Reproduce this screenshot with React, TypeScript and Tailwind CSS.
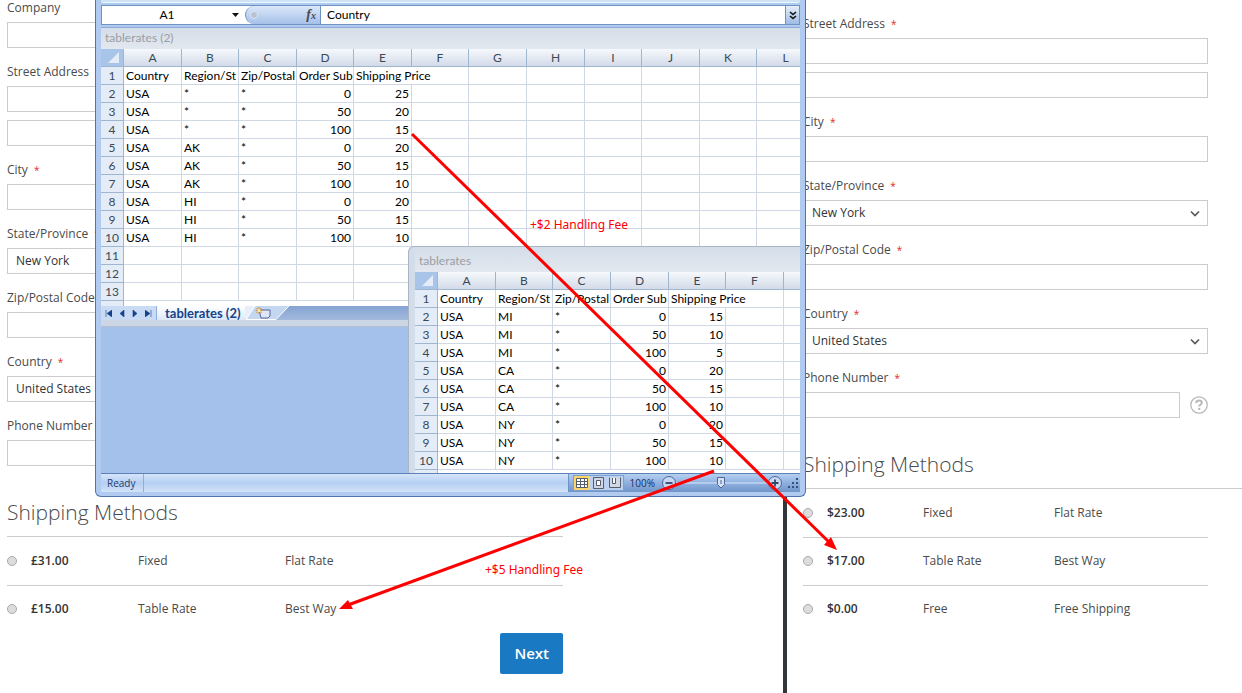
import React from 'react';

const COLUMNS = ['A', 'B', 'C', 'D', 'E', 'F', 'G', 'H', 'I', 'J', 'K', 'L'];
const HEADINGS = ['Country', 'Region/St', 'Zip/Postal', 'Order Sub'];

const FIRST_SHEET = [
  ['USA', '*', '*', '0', '25'],
  ['USA', '*', '*', '50', '20'],
  ['USA', '*', '*', '100', '15'],
  ['USA', 'AK', '*', '0', '20'],
  ['USA', 'AK', '*', '50', '15'],
  ['USA', 'AK', '*', '100', '10'],
  ['USA', 'HI', '*', '0', '20'],
  ['USA', 'HI', '*', '50', '15'],
  ['USA', 'HI', '*', '100', '10'],
  [],
  [],
  [],
];

const SECOND_SHEET = [
  ['USA', 'MI', '*', '0', '15'],
  ['USA', 'MI', '*', '50', '10'],
  ['USA', 'MI', '*', '100', '5'],
  ['USA', 'CA', '*', '0', '20'],
  ['USA', 'CA', '*', '50', '15'],
  ['USA', 'CA', '*', '100', '10'],
  ['USA', 'NY', '*', '0', '20'],
  ['USA', 'NY', '*', '50', '15'],
  ['USA', 'NY', '*', '100', '10'],
];

interface FieldProps {
  id: string;
  label: string;
  required?: boolean;
  options?: string[];
  lines?: number;
  help?: boolean;
}

const Field: React.FC<FieldProps> = ({ id, label, required, options, lines = 1, help }) => (
  <div className="mb-4">
    <label htmlFor={id} className="block text-xs leading-4 mb-1.5 whitespace-nowrap">
      {label}
      {required && <span className="text-[#e02b27] text-[10px] ml-1.5">*</span>}
    </label>
    {options ? (
      <div className="relative">
        <select id={id} className="block w-full h-[26px] appearance-none border border-[#cccccc] bg-white pl-2 text-xs text-[#333333]">
          {options.map((o) => <option key={o}>{o}</option>)}
        </select>
        <svg className="absolute right-2 top-2.5 pointer-events-none" width="10" height="8" viewBox="0 0 10 8" fill="none" stroke="#555" strokeWidth="1.6">
          <path d="M1 1.5 5 5.5 9 1.5" />
        </svg>
      </div>
    ) : (
      <div className="flex items-center gap-2.5">
        <div className="flex-1 space-y-2">
          {Array.from({ length: lines }, (_, i) => (
            <input
              key={i}
              id={i === 0 ? id : `${id}-${i + 1}`}
              aria-label={i === 0 ? undefined : `${label} ${i + 1}`}
              type="text"
              className="block w-full h-[26px] border border-[#cccccc] bg-white px-2 text-xs"
            />
          ))}
        </div>
        {help && (
          <button type="button" aria-label="Help">
            <svg width="18" height="18" viewBox="0 0 18 18" fill="none" stroke="#b8b8b8">
              <circle cx="9" cy="9" r="8.2" strokeWidth="1.3" />
              <path d="M6.2 7C6.200 5.200 7.400 4.400 9 4.400s2.800.9 2.800 2.300c0 1.800-2.600 1.800-2.600 3.900" strokeWidth="2" />
              <path d="M9.200 11.900v2" strokeWidth="2.100" />
            </svg>
          </button>
        )}
      </div>
    )}
  </div>
);

interface MethodsProps {
  name: string;
  rows: string[][];
  cols: string[];
}

const ShippingMethods: React.FC<MethodsProps> = ({ name, rows, cols }) => (
  <table className="w-full table-fixed border-collapse text-xs">
    <colgroup>
      {cols.map((c, i) => <col key={i} className={c} />)}
    </colgroup>
    <tbody>
      {rows.map(([price, method, carrier]) => (
        <tr key={carrier} className="border-b border-[#cccccc] last:border-b-0">
          <td className="h-12">
            <input
              type="radio"
              name={name}
              aria-label={`${method} ${carrier}`}
              className="block appearance-none w-2.5 h-2.5 rounded-full border border-[#a8a8a8] bg-[#dddddd]"
            />
          </td>
          <td className="font-semibold text-[#333333]">{price}</td>
          <td>{method}</td>
          <td>{carrier}</td>
        </tr>
      ))}
    </tbody>
  </table>
);

interface SheetProps {
  columns: string[];
  widths: string[];
  rows: string[][];
}

const Sheet: React.FC<SheetProps> = ({ columns, widths, rows }) => (
  <div className="overflow-hidden">
    <table className="w-full table-fixed border-separate border-spacing-0 bg-white text-xs leading-[17px] text-black">
      <colgroup>
        <col className="w-[23px]" />
        {widths.map((w, i) => <col key={i} className={w} />)}
      </colgroup>
      <thead>
        <tr>
          <th className="h-[18px] p-0 border-r border-b border-[#9eb6ce] bg-[#a9c4e9]">
            <svg className="ml-auto mr-1" width="11" height="11" viewBox="0 0 11 11">
              <path d="M11 0V11H0Z" fill="#e4ecf7" />
            </svg>
          </th>
          {columns.map((c) => (
            <th key={c} scope="col" className="p-0 border-r border-b border-[#9eb6ce] bg-linear-to-b from-[#f6f9fc] to-[#d3dbe9] font-normal text-[#3b4a55]">
              {c}
            </th>
          ))}
        </tr>
      </thead>
      <tbody>
        <tr>
          <th scope="row" className="h-[18px] p-0 border-r border-b border-[#9eb6ce] bg-[#e4ecf7] font-normal text-[#3b4a55]">1</th>
          {HEADINGS.map((h) => (
            <td key={h} className="p-0 pl-0.5 border-r border-b border-[#d0d7e5] whitespace-nowrap overflow-hidden">{h}</td>
          ))}
          <td colSpan={2} className="p-0 pl-0.5 border-r border-b border-[#d0d7e5] whitespace-nowrap">Shipping Price</td>
          {columns.slice(6).map((c) => <td key={c} className="border-r border-b border-[#d0d7e5]" />)}
        </tr>
        {rows.map((row, r) => (
          <tr key={r}>
            <th scope="row" className="h-[18px] p-0 border-r border-b border-[#9eb6ce] bg-[#e4ecf7] font-normal text-[#3b4a55]">{r + 2}</th>
            {columns.map((c, i) => (
              <td key={c} className={`p-0 px-0.5 border-r border-b border-[#d0d7e5] ${i > 2 ? 'text-right' : ''}`}>{row[i]}</td>
            ))}
          </tr>
        ))}
      </tbody>
    </table>
  </div>
);

// strip of the next row that is cut off by the window edge
const CutRow: React.FC<{ height: string }> = ({ height }) => (
  <div className={`flex bg-white ${height}`}>
    <div className="w-[23px] border-r border-[#9eb6ce] bg-[#e4ecf7]" />
  </div>
);

const FormulaBar: React.FC = () => (
  <div className="flex h-5 border border-[#6f94c4] bg-white text-xs text-black">
    <div className="flex w-[143px] items-center">
      <span className="flex-1 text-center">A1</span>
      <button type="button" aria-label="Name box" className="mr-1.5">
        <svg width="7" height="4" viewBox="0 0 7 4"><path d="M0 0H7L3.500 4Z" fill="#111" /></svg>
      </button>
    </div>
    <div className="flex w-[76px] items-center justify-between rounded-l-full border-l border-r border-[#6f94c4] bg-linear-to-b from-[#dbe8fa] to-[#a5c0e8] pl-1 pr-1">
      <span className="w-2 h-2 rounded-full bg-[#b9c2d3] border border-[#dde5f2]" />
      <span className="font-['Liberation_Serif',serif] italic font-bold text-sm text-[#4a4a52]">f<span className="text-[10px]">x</span></span>
    </div>
    <input aria-label="Formula" defaultValue="Country" className="flex-1 min-w-0 pl-1.5 bg-white" />
    <button type="button" aria-label="Expand formula bar" className="flex w-3.5 items-center justify-center border-l border-[#6f94c4] bg-linear-to-b from-[#e6effb] to-[#9dbbe5]">
      <svg width="8" height="9" viewBox="0 0 8 9" fill="none" stroke="#111" strokeWidth="1.600">
        <path d="M1 1 4 3.500 7 1M1 5 4 7.500 7 5" />
      </svg>
    </button>
  </div>
);

const SheetTabs: React.FC = () => (
  <div className="flex h-3.5 bg-linear-to-b from-[#84a4d3] to-[#a3b9dc]">
    <div className="flex w-14 items-center justify-around bg-[#c9dbf4] border-r border-[#8eaedb]">
      {['M2 0V7M8 0V7L3 3.500Z', 'M6 0V7L2 3.500Z', 'M2 0V7L6 3.500Z', 'M0 0V7L5 3.500ZM6 0V7'].map((d) => (
        <button key={d} type="button" aria-label="Scroll tabs">
          <svg width="8" height="7" viewBox="0 0 8 7" fill="#15428b" stroke="#15428b" strokeWidth="0.6"><path d={d} /></svg>
        </button>
      ))}
    </div>
    <button type="button" className="bg-linear-to-b from-white to-[#dce8f8] pl-2 pr-1 text-[13px] leading-[14px] font-bold text-[#15428b] whitespace-nowrap">
      tablerates (2)
    </button>
    <button type="button" aria-label="Insert worksheet">
      <svg width="44" height="14" viewBox="0 0 44 14">
        <path d="M0 0H44L31 13.500H0Z" fill="#c4d7f1" />
        <path d="M0 0H10L1 13.500H0Z" fill="#e6effa" />
        <path d="M10 0 1 13.500H31L44 0" fill="none" stroke="#fff" />
        <path d="M14 4H25V10L23 12H16Z" fill="#dfe6f5" stroke="#55679a" />
        <path d="M14 1V8M10.500 4.500H17.500M11.500 2l5 5M16.500 2l-5 5" stroke="#d98b1f" />
        <circle cx="14" cy="4.500" r="1.500" fill="#fff4c0" />
      </svg>
    </button>
  </div>
);

const StatusBar: React.FC = () => (
  <div className="flex h-[19px] items-stretch border-t border-[#5d82b8] bg-linear-to-b from-[#d6e5fa] via-[#b4cff3] to-[#d3e2f8] font-['Open_Sans',sans-serif] text-[10px] leading-[18px] text-[#1c3a6e]">
    <div className="w-[43px] border-r border-[#8eaedb] pl-1.5">Ready</div>
    <div className="flex-1" />
    <div className="flex items-center gap-1.5 border-l border-[#6f94c4] bg-linear-to-b from-[#b6cff0] via-[#8eb0e0] to-[#7295c8] pl-1">
      <svg width="51" height="16" viewBox="0 0 51 16">
        <rect x=".5" y=".5" width="50" height="15" fill="#bdd2f0" stroke="#7f9fce" />
        <rect x="1" y="1" width="16" height="14" fill="#fbd46c" />
        <g fill="#fff" stroke="#555d6b">
          <path d="M3.500 3.500H14.500V12.500H3.500ZM3.500 6.500H14.500M3.500 9.500H14.500M7.500 3.500V12.500M11.500 3.500V12.500" />
          <path d="M20.500 2.500H30.500V13.500H20.500Z" fill="#cfd8e6" />
          <path d="M23.500 5.500H27.500V10.500H23.500Z" />
          <path d="M36.500 2.500V12.500H47.500V2.500" fill="#cfd8e6" />
          <path d="M39.500 3V8.500H42.500V3" />
        </g>
      </svg>
      <span className="text-[#14306a]">100%</span>
      <svg width="121" height="16" viewBox="0 0 121 16" fill="none">
        <path d="M14 8H107" stroke="#dbe7f8" />
        <circle cx="8" cy="8" r="6.500" fill="#c6d8f2" stroke="#4c6795" />
        <path d="M4.500 8H11.500" stroke="#33486e" strokeWidth="1.800" />
        <circle cx="114" cy="8" r="6.500" fill="#c6d8f2" stroke="#4c6795" />
        <path d="M110.500 8H117.500M114 4.500V11.500" stroke="#33486e" strokeWidth="1.800" />
        <path d="M56.500 2.500H63.500V9.500L60 13 56.500 9.500Z" fill="#d6e3f7" stroke="#4c6795" />
        <path d="M60 5V9" stroke="#4c6795" />
      </svg>
      <svg width="12" height="14" viewBox="0 0 12 14" fill="#31517f">
        <path d="M0 10h2v2H0zM4 10h2v2H4zM8 10h2v2H8zM4 6h2v2H4zM8 6h2v2H8zM8 2h2v2H8z" />
      </svg>
    </div>
  </div>
);

const SpreadsheetWindow: React.FC = () => (
  <section
    aria-label="Spreadsheet"
    className="absolute left-[95px] top-0 w-[711px] h-[497px] flex flex-col overflow-hidden rounded-b-md border border-t-0 border-[#4f74a8] bg-[#b1cbf0] px-[5px] pb-1 font-['Lato','Open_Sans',sans-serif]"
  >
    <div className="h-[3px] shrink-0 rounded-b bg-[#cfe3f5] border-b border-[#e6fbff]" />
    <div className="mt-0.5"><FormulaBar /></div>
    <div className="h-[3px] shrink-0 border-b border-[#8aa9d4]" />
    <div className="h-[21px] shrink-0 bg-linear-to-b from-[#d5dde9] to-[#e1e8ef] pl-1 text-xs leading-5 text-[#9a9da3]">tablerates (2)</div>
    <div>
      <Sheet
        columns={COLUMNS}
        widths={['w-[58px]', 'w-[57px]', 'w-[58px]', 'w-[57px]', 'w-[58px]', 'w-[57px]', 'w-[58px]', 'w-[58px]', 'w-[57px]', 'w-[58px]', 'w-[57px]', 'w-[58px]']}
        rows={FIRST_SHEET}
      />
      <CutRow height="h-[5px]" />
      <SheetTabs />
      <div className="h-[7px] bg-[#cdd6e4] border-b border-[#b5bfd0]" />
    </div>
    <div className="flex-1 bg-[#a3c1ea]" />
    <StatusBar />

    {/* second workbook, floating over the first */}
    <div className="absolute left-[312px] right-[5px] top-[246px] h-[227px] overflow-hidden rounded-tl-md border-t border-l border-[#a9b5c4] bg-[#d3dce9] pl-1.5">
      <div className="h-[25px] bg-linear-to-b from-[#d5dde9] to-[#e1e8ef] pl-1 pt-1 text-xs leading-5 text-[#9a9da3]">tablerates</div>
      <Sheet
        columns={['A', 'B', 'C', 'D', 'E', 'F', '']}
        widths={['w-[58px]', 'w-[57px]', 'w-[58px]', 'w-[58px]', 'w-[57px]', 'w-[58px]', 'w-[57px]']}
        rows={SECOND_SHEET}
      />
      <CutRow height="h-[3px]" />
    </div>
  </section>
);

const Annotations: React.FC = () => (
  <div className="absolute inset-0 pointer-events-none font-['Noto_Sans',sans-serif] text-xs text-[#ff0000]">
    <svg className="absolute left-0 top-0" width="860" height="640" fill="#ff0000" stroke="#ff0000">
      <path d="M412 134 830 543" strokeWidth="3" fill="none" />
      <path d="M837 550 824 545 831 537Z" stroke="none" />
      <path d="M714 471 348 605" strokeWidth="3" fill="none" />
      <path d="M339 609 348 600 353 609Z" stroke="none" />
    </svg>
    <span className="absolute left-[530px] top-[217px] leading-4">+$2 Handling Fee</span>
    <span className="absolute left-[485px] top-[562px] leading-4">+$5 Handling Fee</span>
  </div>
);

const App: React.FC = () => {
  return (
    <div className="relative min-h-screen overflow-hidden bg-white font-['Open_Sans',sans-serif] text-[#4a4a4a] grid grid-cols-[783fr_4px_455fr]">
      <main className="min-w-0 px-[7px]">
        <div className="max-w-[556px]">
          <Field id="company" label="Company" />
          <Field id="street" label="Street Address" required lines={2} />
          <Field id="city" label="City" required />
          <Field id="state" label="State/Province" required options={['New York']} />
          <Field id="zip" label="Zip/Postal Code" />
          <Field id="country" label="Country" required options={['United States']} />
          <Field id="phone" label="Phone Number" />
          <h2 className="mt-[30px] pb-2 border-b border-[#cccccc] text-[21px] leading-8 font-light">Shipping Methods</h2>
          <ShippingMethods
            name="rate-gb"
            cols={['w-6', 'w-[107px]', 'w-[147px]', 'w-auto']}
            rows={[
              ['£31.00', 'Fixed', 'Flat Rate'],
              ['£15.00', 'Table Rate', 'Best Way'],
            ]}
          />
          <div className="flex justify-end">
            <button type="button" className="h-[41px] px-3.5 rounded-xs bg-[#1979c3] text-[15px] font-semibold text-white">Next</button>
          </div>
        </div>
      </main>

      <div className="bg-[#333639]" />

      <aside className="min-w-0 pl-4 pt-4">
        <div className="pr-[34px]">
          <Field id="street-us" label="Street Address" required lines={2} />
          <Field id="city-us" label="City" required />
          <Field id="state-us" label="State/Province" required options={['New York']} />
          <Field id="zip-us" label="Zip/Postal Code" required />
          <Field id="country-us" label="Country" required options={['United States']} />
          <Field id="phone-us" label="Phone Number" required help />
        </div>
        <h2 className="mt-[30px] pb-2 border-b border-[#cccccc] text-[21px] leading-8 font-light">Shipping Methods</h2>
        <div className="pr-[34px]">
          <ShippingMethods
            name="rate-us"
            cols={['w-6', 'w-24', 'w-[131px]', 'w-auto']}
            rows={[
              ['$23.00', 'Fixed', 'Flat Rate'],
              ['$17.00', 'Table Rate', 'Best Way'],
              ['$0.00', 'Free', 'Free Shipping'],
            ]}
          />
        </div>
      </aside>

      <SpreadsheetWindow />
      <Annotations />
    </div>
  );
};

export default App;
